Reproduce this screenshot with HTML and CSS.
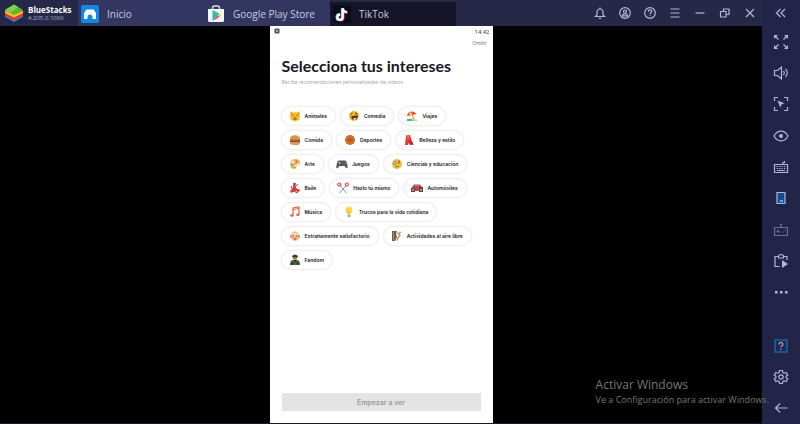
FILE: index.html
```html
<!DOCTYPE html>
<html lang="es">
<head>
<meta charset="utf-8">
<title>BlueStacks</title>
<link rel="stylesheet" href="styles.css">
</head>
<body>
<div class="window">
  <div class="main">
    <header class="topbar">
      <div class="brand">
        <svg class="brand-logo" viewBox="0 0 20 20"><path d="M1 12v2l9 5 9-5v-2l-9 5z" fill="#2f83c9"/><path d="M1 9.500v3l9 5 9-5v-3l-9 4z" fill="#e5382c"/><path d="M1 7.500v2.500l9 4.500 9-4.500V7.500l-9 4z" fill="#f6c22c"/><path d="M10 1.500 19 7l-9 5-9-5z" fill="#5eb82f"/><path d="M10 1.500 14 4 6 10 1 7z" fill="#89cf4a"/></svg>
        <div class="brand-text"><strong class="brand-name">BlueStacks</strong><span class="brand-version">4.205.0.1006</span></div>
      </div>
      <nav class="tabs">
        <a class="tab" href="#inicio">
          <svg class="tab-icon" viewBox="0 0 18 18"><rect width="18" height="18" rx="2" fill="#1089e6"/><path d="M5.500 4.500h7L15 8v6h-3.500v-2a2.500 2.500 0 0 0-5 0v2H3V8z" fill="#fff"/></svg>
          <span>Inicio</span></a>
        <a class="tab" href="#play">
          <svg class="tab-icon" viewBox="0 0 18 18"><path d="M5.500 5V3a2 2 0 0 1 2-2h3a2 2 0 0 1 2 2v2" fill="none" stroke="#d9e8ec" stroke-width="1.300"/><path d="M1 4h16v11.500a1.500 1.500 0 0 1-1.500 1.500h-13A1.500 1.500 0 0 1 1 15.500z" fill="#f5f7f8"/><path d="M5.500 5v11l5-5.500z" fill="#24b7d5"/><path d="m5.500 5 7 3.800-2 1.900z" fill="#41ba6b"/><path d="m12.500 8.800 2 1.700-2 1.500-2-1.500z" fill="#f8c934"/><path d="m5.500 16 5-5.500 2 1.500z" fill="#e6474f"/></svg>
          <span>Google Play Store</span></a>
        <a class="tab tab-active" href="#tiktok" aria-current="page">
          <svg class="tab-icon" viewBox="0 0 18 18"><rect width="18" height="18" rx="3" fill="#0e0c1c"/><g fill="none" stroke-width="2.300"><path d="M9 3.500v8.700A2.700 2.700 0 1 1 6.300 9.500M9 4c.5 2 2 3 4.500 3.200" stroke="#25e8e3"/><path d="M10.400 3.500v9A2.700 2.700 0 1 1 7.700 10M10.400 4.500c.5 2 2 3 4.300 3.200" stroke="#f4315f"/><path d="M9.700 3v9.200A2.700 2.700 0 1 1 7 9.500M9.700 4c.5 2 2 3 4.300 3.200" stroke="#fff"/></g></svg>
          <span>TikTok</span></a>
      </nav>
      <div class="window-tools">
        <button aria-label="Notificaciones"><svg class="line" viewBox="0 0 14 14"><path d="M2.500 10.500h9L10 9V6a3 3 0 0 0-6 0v3zM7 1.500V3M6 12.300h2"/></svg></button>
        <button aria-label="Cuenta"><svg class="line" viewBox="0 0 14 14"><circle cx="7" cy="7" r="5.300"/><circle cx="7" cy="5.600" r="1.500"/><path d="M4.500 9.800V9A1.500 1.500 0 0 1 6 8h2a1.500 1.500 0 0 1 1.500 1v.8z"/></svg></button>
        <button aria-label="Ayuda"><svg class="line" viewBox="0 0 14 14"><circle cx="7" cy="7" r="5.300"/><path d="M5.300 5.700c0-2.300 3.400-2.300 3.400-.2C8.700 6.800 7 6.800 7 8.200M7 9.300v1"/></svg></button>
        <button aria-label="Menú"><svg class="line" viewBox="0 0 14 14"><path d="M2.500 3h9M2.500 7h9M2.500 11h9"/></svg></button>
        <button aria-label="Minimizar"><svg class="line" viewBox="0 0 14 14"><path d="M2.500 7h9"/></svg></button>
        <button aria-label="Restaurar"><svg class="line" viewBox="0 0 14 14"><path d="M2.500 5.500h5.500V11H2.500zM5.500 5.500V3h5.500v5.500H8"/></svg></button>
        <button aria-label="Cerrar"><svg class="line" viewBox="0 0 14 14"><path d="m3 3 8 8M11 3l-8 8"/></svg></button>
      </div>
    </header>
    <main class="stage">
      <section class="phone">
        <div class="status">
          <svg class="status-icon" viewBox="0 0 6 6"><rect x=".5" y=".5" width="5" height="5" rx="1" fill="#555"/><path d="M2 2h2v2H2z" fill="#aaa"/></svg>
          <time>14:42</time>
        </div>
        <a class="skip" href="#omitir">Omitir</a>
        <h1 class="title">Selecciona tus intereses</h1>
        <p class="subtitle">Recibe recomendaciones personalizadas de vídeos</p>
        <div class="chips">
          <button class="chip"><svg viewBox="0 0 12 12"><path d="M1.500 1 4 2.500h4L10.500 1l.5 5-1 4-4 1.500L2 10 1 6z" fill="#f9bd28"/><path d="m2 2 1.500 1.500L2 5zM10 2 8.500 3.500 10 5z" fill="#e98a22"/><path d="M3.500 5.300h1.300M7.200 5.300h1.300M4 8.500c1 1 3 1 4 0M6 7v1.500" stroke="#633e19" stroke-width=".8" fill="none"/></svg>Animales</button>
          <button class="chip"><svg viewBox="0 0 12 12"><circle cx="6" cy="6" r="5" fill="#f5b82e"/><path d="m2.500 4.500 2-1.500M7 3l2.500.8" stroke="#503513" stroke-width="1"/><path d="M3 6.500 9.500 5c.5 3-1 5-3.500 5-1.500 0-2.500-1.500-3-3.500z" fill="#563719"/><path d="m5 8.500 2.500-.7.500 1.500-1.500.7z" fill="#fff3e0"/></svg>Comedia</button>
          <button class="chip"><svg viewBox="0 0 12 12"><path d="M1 6C1.500 2 6-.5 10.500 4L7 5z" fill="#e44b37"/><path d="M3 2.800C5 2 6.500 3 7 5L4 5.500z" fill="#ffd35a"/><path d="m6 4 2 5" stroke="#a96e38" stroke-width=".8"/><path d="M2 10c2-2 6-2 9 0v1H2z" fill="#f0c668"/><path d="M1 9h5v2H1z" fill="#44b5a3"/></svg>Viajes</button>
          <button class="chip"><svg viewBox="0 0 12 12"><path d="M1 5c0-5 10-5 10 0z" fill="#dc963f"/><path d="M1 5h10v2H1z" fill="#a8913a"/><path d="M1 6.500h10v2H1z" fill="#79402c"/><path d="m1 5.500 3 1.500 2-1 2 1 3-1.500" stroke="#e6554a" fill="none"/><path d="M1 8.500h10c0 3-2 2.500-5 2.500S1 11 1 8.500z" fill="#df9f52"/></svg>Comida</button>
          <button class="chip"><svg viewBox="0 0 12 12"><circle cx="6" cy="6" r="5" fill="#e5772a"/><path d="M1 6h10M6 1v10M2.500 2.500c2.500 2 2.500 5 0 7M9.500 2.500c-2.500 2-2.500 5 0 7" fill="none" stroke="#8a451f" stroke-width=".6"/></svg>Deportes</button>
          <button class="chip"><svg viewBox="0 0 12 12"><path d="M3 1.500 7 1l1.500 5L10.500 11H7L5 9v2H2z" fill="#e33a35"/><path d="m7 6 3 3v2L7 9z" fill="#a92330"/><path d="M4 1.500h2V5H4z" fill="#f16a58"/></svg>Belleza y estilo</button>
          <button class="chip"><svg viewBox="0 0 12 12"><path d="M6 1c6 0 6 6 3.500 6S8 11 5 11C-.5 11 0 1 6 1z" fill="#e9b559"/><circle cx="4" cy="4" r="1.200" fill="#fff"/><circle cx="7.500" cy="3.500" r="1" fill="#e95645"/><circle cx="3" cy="7" r="1" fill="#51a6db"/><path d="m5 8 5-3 .5 1-5 3z" fill="#fff3d7"/><circle cx="5.500" cy="9.300" r=".8" fill="#68a648"/></svg>Arte</button>
          <button class="chip"><svg viewBox="0 0 12 12"><path d="M2.500 2.500h7c1.500 1 2.500 6 2 7.500-1 1-2-1-3-2h-5c-1 1-2 3-3 2-.5-1.500.5-6.500 2-7.500z" fill="#54595e"/><path d="M2.500 5h2M3.500 4v2" stroke="#ddd" stroke-width=".7"/><circle cx="8.500" cy="4" r=".6" fill="#e35"/><circle cx="9.500" cy="5.500" r=".6" fill="#5bd"/></svg>Juegos</button>
          <button class="chip"><svg viewBox="0 0 12 12"><circle cx="6" cy="6" r="5" fill="#f4bd3e"/><circle cx="4" cy="5" r="1.700" fill="#fff" stroke="#8b6528" stroke-width=".6"/><circle cx="4" cy="5" r=".7" fill="#523719"/><circle cx="8" cy="5" r=".7" fill="#523719"/><path d="M7 3.200h2M4.500 8.800l3-.5" stroke="#6c4921" stroke-width=".8"/></svg>Ciencias y educación</button>
          <button class="chip"><svg viewBox="0 0 12 12"><circle cx="5.500" cy="2" r="1.300" fill="#70402d"/><path d="m4 3 3 .5L7 6l4 2-1 2-4-1-4 2-1-2 3-3z" fill="#d83f36"/><path d="m3 4-1 2 2 1M7 4l2-2M4 9l5 2" fill="none" stroke="#94513a" stroke-width="1"/></svg>Baile</button>
          <button class="chip"><svg viewBox="0 0 12 12"><path d="m2.500 3 7 8M9.500 3l-7 8" stroke="#8c969e" stroke-width="1"/><g fill="none" stroke="#dc4540" stroke-width="1.100"><circle cx="2.200" cy="2.500" r="1.500"/><circle cx="9.800" cy="2.500" r="1.500"/></g></svg>Hazlo tú mismo</button>
          <button class="chip"><svg viewBox="0 0 12 12"><path d="M1 5 3 2.500h6L11 5v4H1z" fill="#cf4140"/><path d="m3 4 1-1h4l1 1z" fill="#6d91a5"/><path d="M0 6h4v4H0zM8 5h4v5H8z" fill="#58434b"/><circle cx="2" cy="8" r="1" fill="#bbb"/><circle cx="10" cy="8" r="1" fill="#bbb"/></svg>Automóviles</button>
          <button class="chip"><svg viewBox="0 0 12 12"><path d="M4 9.500V2l6-1v7.500" fill="none" stroke="#e96143" stroke-width="1.200"/><path d="m4 3.500 6-1" stroke="#e96143"/><ellipse cx="2.800" cy="9.500" rx="1.700" ry="1.300" fill="#e96143"/><ellipse cx="8.800" cy="8.700" rx="1.700" ry="1.300" fill="#e96143"/></svg>Música</button>
          <button class="chip"><svg viewBox="0 0 12 12"><path d="M4.500 8.500C4.500 7 2.500 6 2.500 4a3.500 3.500 0 0 1 7 0c0 2-2 3-2 4.500z" fill="#fcd64b"/><path d="M5 5.500 6 7l1-1.500M6 7v1.500" stroke="#e6a92c" stroke-width=".6" fill="none"/><path d="M4.500 8.800h3V11h-3z" fill="#a2a7a7"/></svg>Trucos para la vida cotidiana</button>
          <button class="chip"><svg viewBox="0 0 12 12"><path d="M2 5c0-5 8-5 8 0v3c-1 4-7 4-8 0z" fill="#efc194"/><path d="M1 5h2v3H1zM9 5h2v3H9z" fill="#d9a279"/><path d="M3 4h6" stroke="#f9e5c9" stroke-width="1.300"/><path d="M3.500 6h1.300M7.200 6h1.300" stroke="#573827" stroke-width=".8"/><ellipse cx="6" cy="8.700" rx="1.500" ry="1" fill="#c65c4b"/></svg>Extrañamente satisfactorio</button>
          <button class="chip"><svg viewBox="0 0 12 12"><path d="M1 1h5L5 4l1 3-2 4H1z" fill="#6c604d"/><path d="M2 2h1v8H2z" fill="#9e9175"/><circle cx="9" cy="2.500" r="1.100" fill="#d49b63"/><path d="m8 3.500 1 2-2 2-1 3M8 4 6 3" fill="none" stroke="#bc7b43" stroke-width="1.200"/></svg>Actividades al aire libre</button>
          <button class="chip"><svg viewBox="0 0 12 12"><circle cx="6" cy="3.500" r="2.300" fill="#a66a46"/><path d="M3 3c0-3 6-3 6 0z" fill="#343e2c"/><path d="M1 11c0-5 2-5 5-5s5 0 5 5z" fill="#4c663a"/><path d="m4 6 2 2 2-2" fill="#252b29"/><path d="M2.500 8.500h2v2h-2zM7.500 8.500h2v2h-2z" fill="#263528"/></svg>Fandom</button>
        </div>
        <button class="start" disabled>Empezar a ver</button>
      </section>
    </main>
  </div>
  <aside class="sidebar">
    <button class="collapse" aria-label="Contraer"><svg class="line" viewBox="0 0 14 14"><path d="M6.500 3 2.500 7l4 4M11 3 7 7l4 4"/></svg></button>
    <div class="side-tools">
      <button aria-label="Pantalla completa"><svg class="line" viewBox="0 0 16 16"><path d="M5.500 5.500 1.500 1.500M10.500 5.500l4-4M5.500 10.500l-4 4M10.500 10.500l4 4"/><path class="solid" d="M1 1h4L1 5zM15 1v4l-4-4zM1 15v-4l4 4zM15 15h-4l4-4z"/></svg></button>
      <button aria-label="Volumen"><svg class="line" viewBox="0 0 16 16"><path d="M1.500 5.500h3l4-3.500v12l-4-3.500h-3zM10.500 6c1 1 1 3 0 4M12.500 4c2.300 2 2.300 6 0 8"/></svg></button>
      <button aria-label="Bloquear cursor"><svg class="line" viewBox="0 0 16 16"><path d="M1.500 5V1.500H5M11 1.500h3.500V5M14.500 11v3.500H11M5 14.500H1.500V11"/><path class="solid" d="m4.500 4.500 7 2.800-3 1.200-1.200 3z"/></svg></button>
      <button aria-label="Visibilidad"><svg class="line" viewBox="0 0 16 16"><path d="M1 8c3.500-6.500 10.500-6.500 14 0-3.500 6.500-10.500 6.500-14 0z"/><circle class="solid" cx="8" cy="8" r="2"/></svg></button>
      <button aria-label="Controles de teclado"><svg class="line" viewBox="0 0 16 16"><path d="M1.500 5.500h13v8h-13zM10 5.500v-2h1.500V2M4 11.500h8"/><path d="M3.500 7.500h9M3.500 9.500h9" stroke-dasharray="1.300 1.200"/></svg></button>
      <button aria-label="Girar pantalla"><svg class="line" viewBox="0 0 16 16"><path d="M4 2.500h8v11H4z" fill="#164d89"/><path d="M7 11h3" stroke="#48b4ff" stroke-width="2"/></svg></button>
      <button class="dim" aria-label="Mando"><svg class="line" viewBox="0 0 16 16"><path d="M1.500 5.500h13v8h-13zM8 5.500V3M7 2.500h2M3.500 9.500h3M5 8v3M9.500 10h1M11.500 8.500h1"/></svg></button>
      <button aria-label="Macros"><svg class="line" viewBox="0 0 16 16"><path d="M5 3.500H2v10h4.500M11 3.500h3V7M5.500 3.500a2.500 2 0 0 1 5 0V5h-5z"/><path class="solid" d="m9 7 6 4-6 4z"/></svg></button>
      <button aria-label="Más"><svg class="line" viewBox="0 0 16 16"><path class="solid" d="M2 7h2.500v2.500H2zM7 7h2.500v2.500H7zM12 7h2.500v2.500H12z"/></svg></button>
    </div>
    <div class="side-nav">
      <button aria-label="Ayuda"><svg class="line" viewBox="0 0 16 16"><rect x="2" y="2" width="12" height="12" fill="#172c58" stroke="#1e70b6"/><path d="M6 6.500c0-2.700 4-2.700 4-.3C10 7.700 8 7.700 8 9.300M8 10.500V12" stroke="#d09a91"/></svg></button>
      <button aria-label="Configuración"><svg class="line" viewBox="0 0 16 16"><path d="m6.500 1.500-.4 2-1.300.7-2-.7-1.500 2.600L2.900 7.300v1.400l-1.600 1.200 1.500 2.600 2-.7 1.300.7.400 2h3l.4-2 1.300-.7 2 .7 1.500-2.600-1.600-1.200V7.300l1.600-1.200-1.500-2.600-2 .7-1.300-.7-.4-2z"/><circle cx="8" cy="8" r="2.200"/></svg></button>
      <button aria-label="Atrás"><svg class="line" viewBox="0 0 16 16"><path d="M14.500 8h-12M7 3.500 2.500 8 7 12.500"/></svg></button>
    </div>
  </aside>
  <div class="watermark"><p class="watermark-title">Activar Windows</p><p class="watermark-text">Ve a Configuración para activar Windows.</p></div>
</div>
</body>
</html>
```
FILE: styles.css
```css
* { box-sizing: border-box; }
body { margin: 0; background: #000; font-family: "Open Sans", "Liberation Sans", sans-serif; }
h1, p { margin: 0; }
button { margin: 0; padding: 0; border: 0; background: none; font: inherit; color: inherit; }
a { color: inherit; text-decoration: none; }
svg { display: block; flex: none; }

.window { position: relative; display: flex; min-height: 100vh; background: #232548; }
.main { flex: 1; display: flex; flex-direction: column; }

.topbar { display: flex; height: 26px; background: #262847; }
.brand { display: flex; align-items: center; gap: 4px; width: 78px; padding-left: 4px; }
.brand-logo { width: 20px; height: 20px; }
.brand-text { display: flex; flex-direction: column; color: #fff; }
.brand-name { font-size: 8px; line-height: 10px; }
.brand-version { font-size: 6px; line-height: 7px; color: #aeb0cc; }
.tabs { display: flex; }
.tab { display: flex; align-items: center; gap: 7px; width: 126px; padding: 2px 3px 0; background: #333660; color: #c9cbe4; font-size: 10px; line-height: 14px; white-space: nowrap; }
.tab-active { margin-top: 2px; padding-top: 0; background: #151428; }
.tab-icon { width: 18px; height: 18px; }
.tab span { padding-left: 1px; }
.window-tools { display: flex; margin-left: auto; }
.window-tools button { display: grid; place-items: center; width: 25px; }
.window-tools svg, .collapse svg { width: 14px; height: 14px; }
.line { fill: none; stroke: #b2b6dc; stroke-width: 1.2; }
.line .solid { fill: #b2b6dc; stroke: none; }

.stage { flex: 1; display: flex; justify-content: center; background: #000; border-bottom: 1px solid #17182d; }
.phone { display: flex; flex-direction: column; width: 223px; padding: 0 12px 12px; background: #fff; color: #161823; font-family: Inter, "Liberation Sans", sans-serif; }
.status { display: flex; justify-content: space-between; align-items: center; margin: 0 -9px 0 -8px; height: 10px; font-size: 6px; color: #444; font-family: Roboto, sans-serif; }
.status-icon { width: 6px; height: 6px; }
.skip { align-self: flex-end; margin: 3px -6px 0 0; font-size: 5px; line-height: 8px; color: #777; }
.title { margin-top: 9px; font-family: Lato, "Liberation Sans", sans-serif; font-size: 16px; line-height: 20px; font-weight: 700; white-space: nowrap; }
.subtitle { margin-top: 2px; font-size: 5px; line-height: 8px; color: #aaa; }
.chips { display: flex; flex-wrap: wrap; gap: 6px; margin-top: 21px; }
.chip { display: flex; align-items: center; gap: 4px; height: 18px; padding: 0 8px 0 7px; border-radius: 9px; background: #fff; box-shadow: 0 0 3px rgba(0, 0, 0, .18); font-size: 5px; font-weight: 600; white-space: nowrap; }
.chip svg { width: 12px; height: 12px; }
.start { height: 18px; margin-top: auto; background: #e4e4e4; color: #999; font-size: 7px; font-weight: 600; }

.sidebar { display: flex; flex-direction: column; width: 38px; padding-bottom: 1px; background: #232548; }
.sidebar button { display: grid; place-items: center; }
.collapse { height: 26px; }
.side-tools { flex: 1; display: grid; grid-auto-rows: 1fr; margin-bottom: 22px; }
.side-nav { display: grid; grid-auto-rows: 31px; }
.side-tools svg, .side-nav svg { width: 16px; height: 16px; }
.sidebar .dim { opacity: .5; }

.watermark { position: absolute; right: 31px; bottom: 18px; color: #777; white-space: nowrap; pointer-events: none; }
.watermark-title { font-size: 12px; line-height: 16px; }
.watermark-text { font-size: 9px; line-height: 13px; }
```
